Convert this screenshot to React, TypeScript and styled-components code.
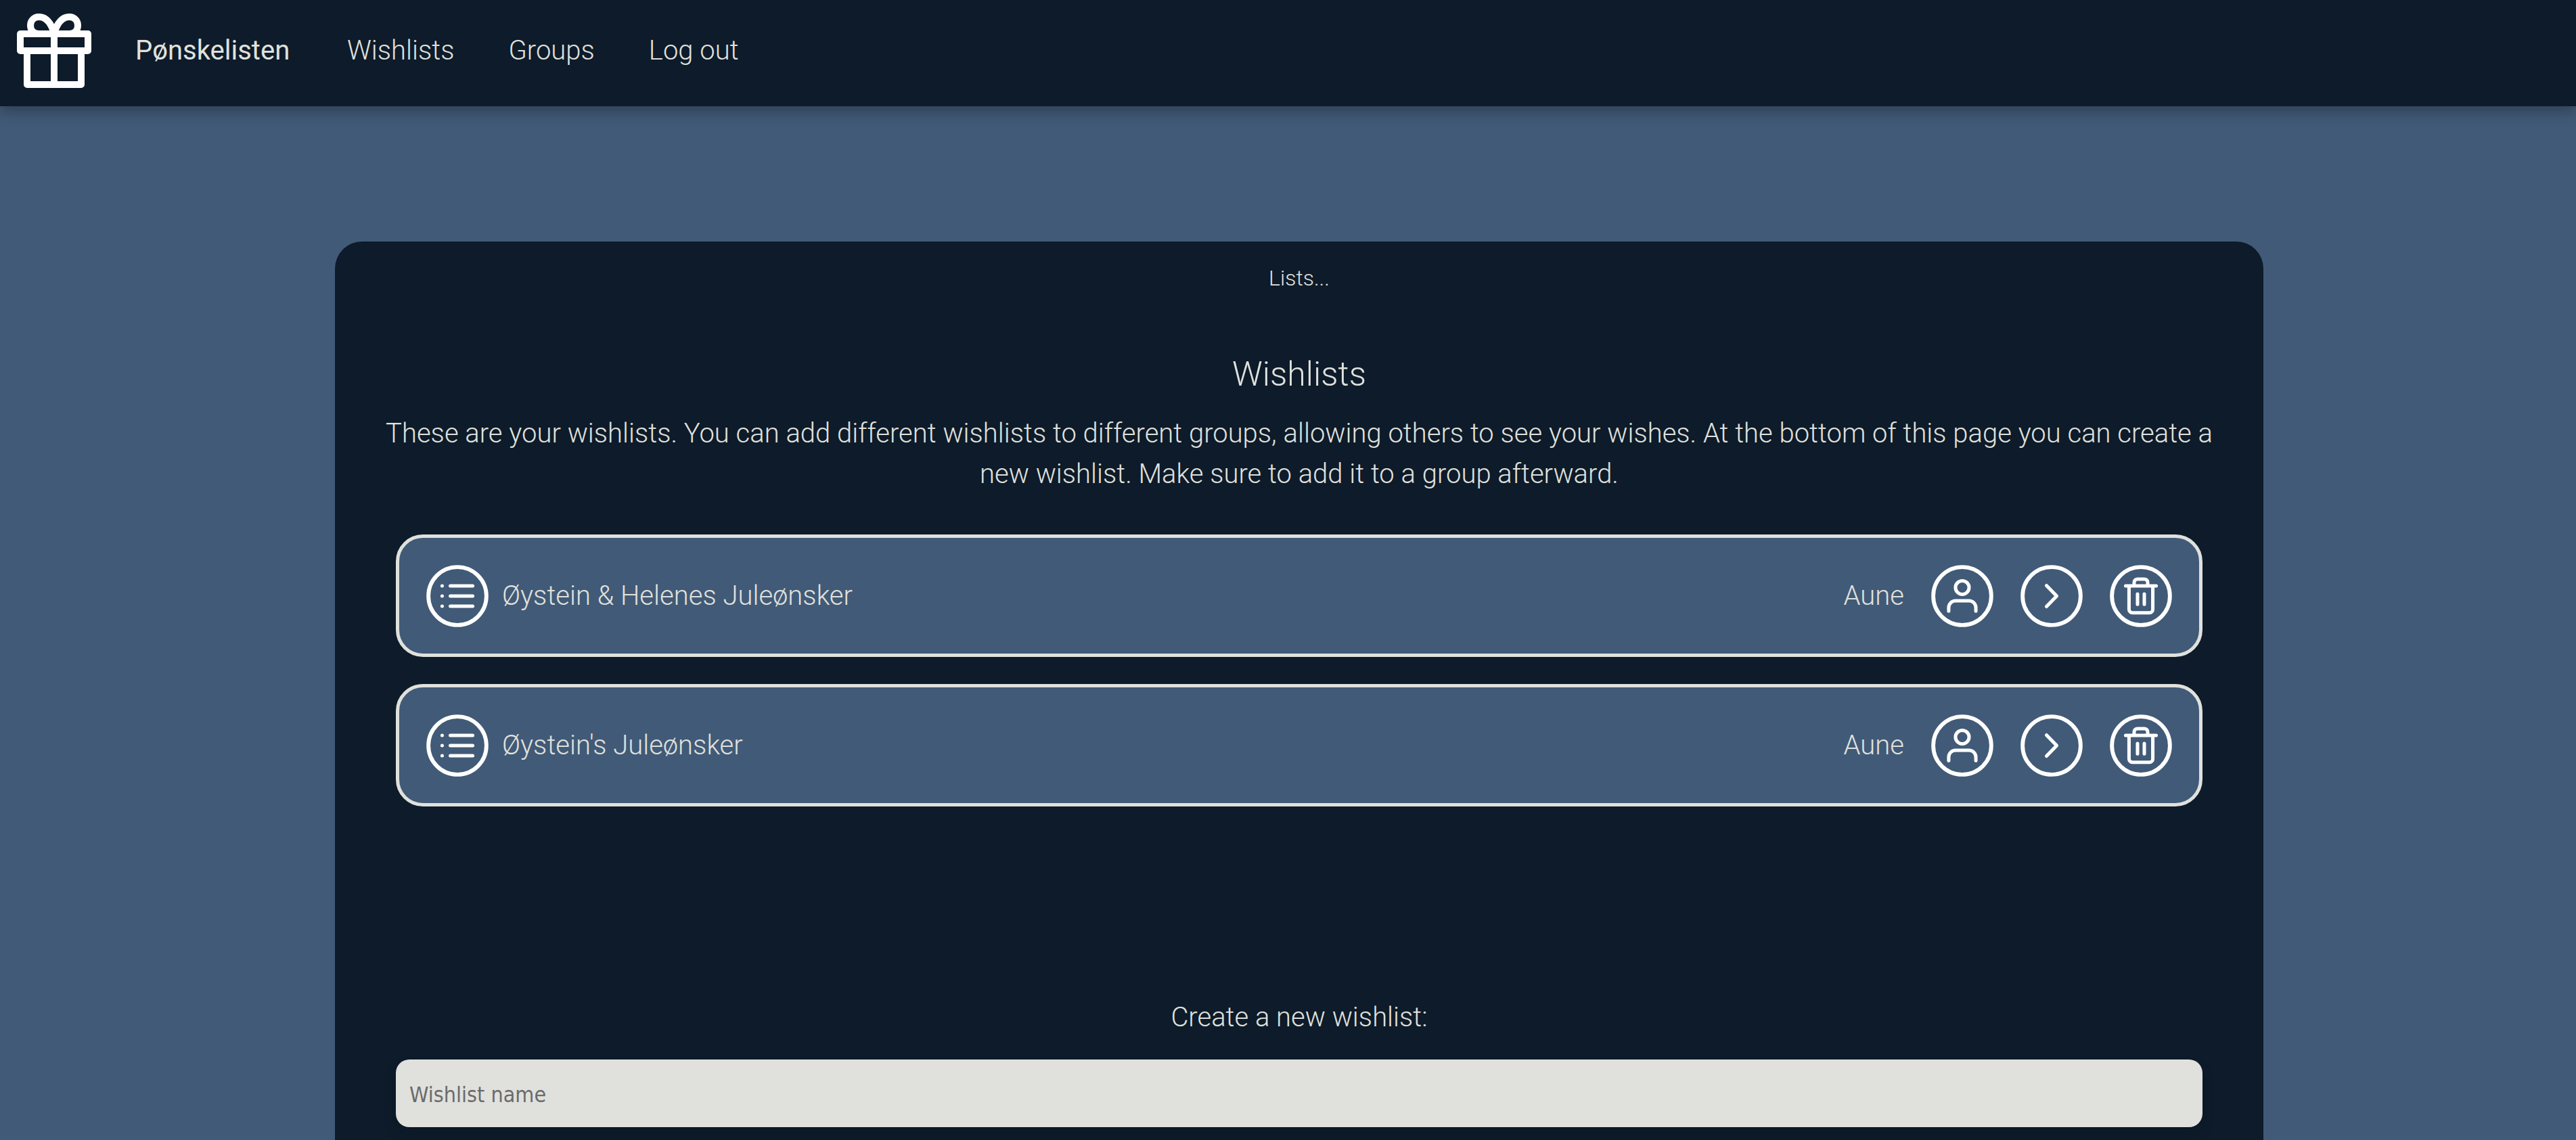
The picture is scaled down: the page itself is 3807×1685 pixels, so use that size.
import React from "react";
import styled, { createGlobalStyle } from "styled-components";

const GlobalStyle = createGlobalStyle`
  * { box-sizing: border-box; }
  html { background: #415a77; }
  body {
    margin: 0;
    color: #e0e1dd;
    font: 300 40px/60px Roboto, "Open Sans", sans-serif;
  }
`;

const Navbar = styled.nav`
  display: flex;
  align-items: center;
  height: 157px;
  padding: 0 0 7px 20px;
  background: #0d1b2a;
  box-shadow: 0 8px 20px rgba(0, 0, 0, 0.28);
`;

const Logo = styled.a`
  display: block;
  width: 120px;
  height: 120px;
  margin-right: 60px;
  svg { display: block; }
`;

const NavLinks = styled.div`
  display: flex;
  gap: 80px;
`;

const NavLink = styled.a`
  color: inherit;
  text-decoration: none;
`;

const Brand = styled(NavLink)`
  min-width: 233px;
  font-weight: 400;
`;

const Page = styled.main`
  padding: 200px 0 0 33px;
`;

const Panel = styled.section`
  max-width: 2850px;
  margin: 0 auto;
  padding: 30px 75px 100px;
  border-radius: 40px;
  background: #0d1b2a;
  text-align: center;
`;

const Status = styled.p`
  margin: 0;
  font-size: 32px;
  line-height: 48px;
`;

const Title = styled.h1`
  margin: 80px 0 0;
  font-size: 50px;
  font-weight: 300;
  line-height: 76px;
`;

const Intro = styled.p`
  margin: 20px 0 0;
`;

const Lists = styled.ul`
  display: flex;
  flex-direction: column;
  gap: 40px;
  margin: 59px 0 0;
  padding: 0 15px;
  list-style: none;
`;

const Row = styled.li`
  display: flex;
  align-items: center;
  justify-content: space-between;
  height: 181px;
  padding: 0 40px;
  border: 5px solid #e0e1dd;
  border-radius: 40px;
  background: #415a77;
`;

const RowGroup = styled.div<{ $gap: number }>`
  display: flex;
  align-items: center;
  gap: ${(p) => p.$gap}px;
`;

const IconButton = styled.button`
  display: block;
  padding: 0;
  border: 0;
  background: none;
  cursor: pointer;
  svg { display: block; }
`;

const Form = styled.form`
  display: flex;
  flex-direction: column;
  gap: 32px;
  margin-top: 282px;
  padding: 0 15px;
`;

const NameInput = styled.input`
  height: 100px;
  padding: 4px 20px 0;
  border: 0;
  border-radius: 20px;
  background: #e0e1dd;
  box-shadow: 0 10px 20px rgba(0, 0, 0, 0.1);
  color: #0d1b2a;
  font: 400 32px "DejaVu Sans Condensed", "Noto Sans", sans-serif;
  &::placeholder { color: #6b6b6b; opacity: 1; }
`;

const GiftIcon = () => (
  <svg width="120" height="120" viewBox="0 0 24 24" fill="none" stroke="#fff" strokeWidth="2" strokeLinejoin="round">
    <path d="M2 7h20v5H2zM4 12v10h16V12M12 7v15" />
    <path d="M12 7H7.500C5.900 7 5 5.900 5 4.500C5 3.100 6 2 7.500 2C11 2 12 7 12 7z" />
    <path d="M12 7h4.500C18.100 7 19 5.900 19 4.500C19 3.100 18 2 16.500 2C13 2 12 7 12 7z" />
  </svg>
);

const CircleIcon = ({ children }: { children?: React.ReactNode }) => (
  <svg width="92" height="92" viewBox="1 1 22 22" fill="none" stroke="#fff" strokeWidth="1.2" strokeLinecap="round" strokeLinejoin="round">
    <circle cx="12" cy="12" r="10.250" strokeWidth="1.4" />
    {children}
  </svg>
);

const ListIcon = () => (
  <CircleIcon>
    <path d="M9.500 8.400h7.900M9.500 12h7.900M9.500 15.600h7.900M6.600 8.400h.01M6.600 12h.01M6.600 15.600h.01" />
  </CircleIcon>
);
const UserIcon = () => (
  <CircleIcon>
    <circle cx="12" cy="9" r="2.400" />
    <path d="M7.200 17.300v-1.200a2.400 2.400 0 0 1 2.400-2.400h4.800a2.400 2.400 0 0 1 2.400 2.400v1.200" />
  </CircleIcon>
);
const ArrowIcon = () => (
  <CircleIcon>
    <path d="M10.200 8.300l3.600 3.700l-3.600 3.700" />
  </CircleIcon>
);
const TrashIcon = () => (
  <CircleIcon>
    <path d="M6.600 8.400h10.800M7.800 8.400v8.300a1.200 1.200 0 0 0 1.200 1.200h6a1.200 1.200 0 0 0 1.200-1.200V8.400M9.600 8.400V7.200a1.200 1.200 0 0 1 1.200-1.200h2.400a1.200 1.200 0 0 1 1.200 1.200v1.200M10.800 11.300v3.600M13.200 11.300v3.600" />
  </CircleIcon>
);

const wishlists = [
  { name: "Øystein & Helenes Juleønsker", group: "Aune" },
  { name: "Øystein's Juleønsker", group: "Aune" },
];

export default function App() {
  return (
    <>
      <GlobalStyle />
      <Navbar>
        <Logo href="#" aria-label="Home"><GiftIcon /></Logo>
        <NavLinks>
          <Brand href="#">Pønskelisten</Brand>
          <NavLink href="#wishlists">Wishlists</NavLink>
          <NavLink href="#groups">Groups</NavLink>
          <NavLink href="#logout">Log out</NavLink>
        </NavLinks>
      </Navbar>
      <Page>
        <Panel>
          <Status>Lists...</Status>
          <Title>Wishlists</Title>
          <Intro>
            These are your wishlists. You can add different wishlists to different groups, allowing others to see your
            wishes. At the bottom of this page you can create a new wishlist. Make sure to add it to a group afterward.
          </Intro>
          <Lists>
            {wishlists.map((list) => (
              <Row key={list.name}>
                <RowGroup $gap={20}>
                  <ListIcon />
                  <span>{list.name}</span>
                </RowGroup>
                <RowGroup $gap={40}>
                  <span>{list.group}</span>
                  <IconButton type="button" aria-label="Members"><UserIcon /></IconButton>
                  <IconButton type="button" aria-label="Open"><ArrowIcon /></IconButton>
                  <IconButton type="button" aria-label="Delete"><TrashIcon /></IconButton>
                </RowGroup>
              </Row>
            ))}
          </Lists>
          <Form>
            <label htmlFor="wishlist-name">Create a new wishlist:</label>
            <NameInput id="wishlist-name" type="text" placeholder="Wishlist name" />
          </Form>
        </Panel>
      </Page>
    </>
  );
}
